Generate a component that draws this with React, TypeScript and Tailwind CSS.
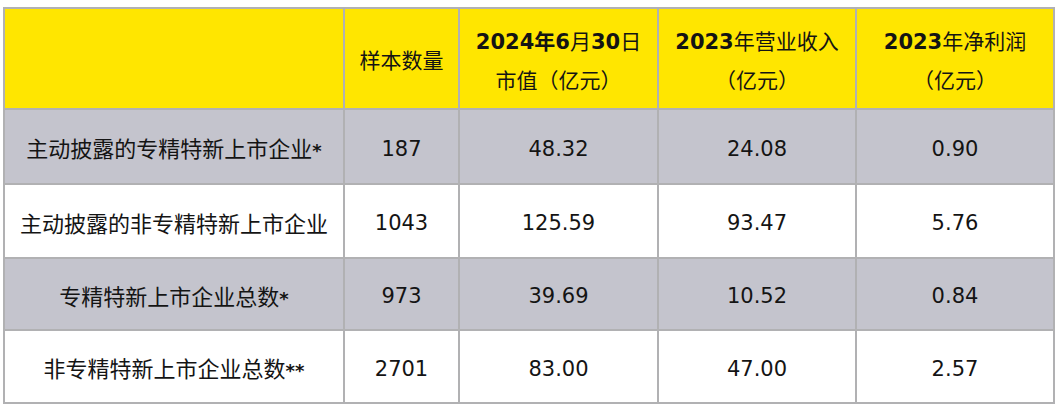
const FONT = "font-['DejaVu_Sans','Noto_Sans_CJK_SC',sans-serif]";

const ROWS = [
  { label: "主动披露的专精特新上市企业", mark: "*", values: ["187", "48.32", "24.08", "0.90"], shaded: true, h: "h-[73px]" },
  { label: "主动披露的非专精特新上市企业", mark: "", values: ["1043", "125.59", "93.47", "5.76"], shaded: false, h: "h-[72px]" },
  { label: "专精特新上市企业总数", mark: "*", values: ["973", "39.69", "10.52", "0.84"], shaded: true, h: "h-[70px]" },
  { label: "非专精特新上市企业总数", mark: "**", values: ["2701", "83.00", "47.00", "2.57"], shaded: false, h: "h-[71px]" },
];

function Cell({ children, className = "" }: { children?: React.ReactNode; className?: string }) {
  return (
    <div className={`flex flex-col items-center justify-center text-center ${className}`}>
      {children}
    </div>
  );
}

export default function App() {
  return (
    <div className={`w-[1059px] h-[407px] bg-white pl-[3px] pt-[7px] text-[#141414] ${FONT}`}>
      <div className="grid w-[1052px] grid-cols-[338px_113px_197px_196px_196px] gap-[2px] bg-[#b1b1b3] p-[2px]">
        {/* Header */}
        <Cell className="h-[99px] bg-[#ffe600]" />
        <Cell className="h-[99px] bg-[#ffe600] pt-[6px] text-[21px]">
          <span>样本数量</span>
        </Cell>
        <Cell className="h-[99px] bg-[#ffe600] pt-[7px] text-[21px] leading-[39px]">
          <span>
            <b>2024</b>
            <b>年</b>
            <b>6</b>月<b>30</b>日
          </span>
          <span>市值（亿元）</span>
        </Cell>
        <Cell className="h-[99px] bg-[#ffe600] pt-[7px] text-[21px] leading-[39px]">
          <span>
            <b>2023</b>年营业收入
          </span>
          <span>（亿元）</span>
        </Cell>
        <Cell className="h-[99px] bg-[#ffe600] pt-[7px] text-[21px] leading-[39px]">
          <span>
            <b>2023</b>年净利润
          </span>
          <span>（亿元）</span>
        </Cell>

        {/* Body */}
        {ROWS.map((row) => (
          <div key={row.label} className="contents">
            <Cell className={`${row.h} pt-[6px] text-[22px] ${row.shaded ? "bg-[#c4c4cd]" : "bg-white"}`}>
              <span>
                {row.label}
                {row.mark && <b className="text-[18px]">{row.mark}</b>}
              </span>
            </Cell>
            {row.values.map((v, i) => (
              <Cell
                key={i}
                className={`${row.h} pt-[6px] text-[21px] ${row.shaded ? "bg-[#c4c4cd]" : "bg-white"}`}
              >
                {v}
              </Cell>
            ))}
          </div>
        ))}
      </div>
    </div>
  );
}
